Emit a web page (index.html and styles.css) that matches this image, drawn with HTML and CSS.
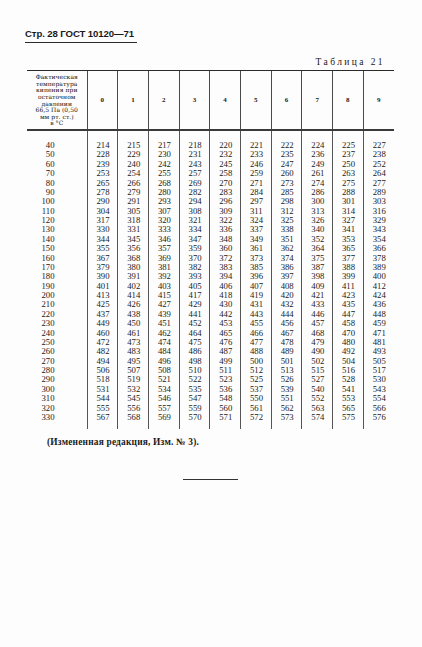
FILE: index.html
```html
<!DOCTYPE html>
<html lang="ru">
<head>
<meta charset="utf-8">
<title>ГОСТ 10120—71, стр. 28</title>
<link rel="stylesheet" href="styles.css">
</head>
<body>
<div class="page">
  <div class="running"><span class="runhead">Стр. 28 ГОСТ 10120—71</span></div>
  <div class="caption">Таблица 21</div>
  <table class="data">
    <colgroup><col class="c-first"><col span="10" class="c-num"></colgroup>
    <thead>
      <tr>
        <th class="lead">Фактическая<br>температура<br>кипения при<br>остаточном<br>давлении<br>66,5 Па (0,50<br>мм рт. ст.)<br>в °С</th>
        <th>0</th><th>1</th><th>2</th><th>3</th><th>4</th><th>5</th><th>6</th><th>7</th><th>8</th><th>9</th>
      </tr>
    </thead>
    <tbody>
      <tr class="first"><td>40</td><td>214</td><td>215</td><td>217</td><td>218</td><td>220</td><td>221</td><td>222</td><td>224</td><td>225</td><td>227</td></tr>
      <tr><td>50</td><td>228</td><td>229</td><td>230</td><td>231</td><td>232</td><td>233</td><td>235</td><td>236</td><td>237</td><td>238</td></tr>
      <tr><td>60</td><td>239</td><td>240</td><td>242</td><td>243</td><td>245</td><td>246</td><td>247</td><td>249</td><td>250</td><td>252</td></tr>
      <tr><td>70</td><td>253</td><td>254</td><td>255</td><td>257</td><td>258</td><td>259</td><td>260</td><td>261</td><td>263</td><td>264</td></tr>
      <tr><td>80</td><td>265</td><td>266</td><td>268</td><td>269</td><td>270</td><td>271</td><td>273</td><td>274</td><td>275</td><td>277</td></tr>
      <tr><td>90</td><td>278</td><td>279</td><td>280</td><td>282</td><td>283</td><td>284</td><td>285</td><td>286</td><td>288</td><td>289</td></tr>
      <tr><td>100</td><td>290</td><td>291</td><td>293</td><td>294</td><td>296</td><td>297</td><td>298</td><td>300</td><td>301</td><td>303</td></tr>
      <tr><td>110</td><td>304</td><td>305</td><td>307</td><td>308</td><td>309</td><td>311</td><td>312</td><td>313</td><td>314</td><td>316</td></tr>
      <tr><td>120</td><td>317</td><td>318</td><td>320</td><td>321</td><td>322</td><td>324</td><td>325</td><td>326</td><td>327</td><td>329</td></tr>
      <tr><td>130</td><td>330</td><td>331</td><td>333</td><td>334</td><td>336</td><td>337</td><td>338</td><td>340</td><td>341</td><td>343</td></tr>
      <tr><td>140</td><td>344</td><td>345</td><td>346</td><td>347</td><td>348</td><td>349</td><td>351</td><td>352</td><td>353</td><td>354</td></tr>
      <tr><td>150</td><td>355</td><td>356</td><td>357</td><td>359</td><td>360</td><td>361</td><td>362</td><td>364</td><td>365</td><td>366</td></tr>
      <tr><td>160</td><td>367</td><td>368</td><td>369</td><td>370</td><td>372</td><td>373</td><td>374</td><td>375</td><td>377</td><td>378</td></tr>
      <tr><td>170</td><td>379</td><td>380</td><td>381</td><td>382</td><td>383</td><td>385</td><td>386</td><td>387</td><td>388</td><td>389</td></tr>
      <tr><td>180</td><td>390</td><td>391</td><td>392</td><td>393</td><td>394</td><td>396</td><td>397</td><td>398</td><td>399</td><td>400</td></tr>
      <tr><td>190</td><td>401</td><td>402</td><td>403</td><td>405</td><td>406</td><td>407</td><td>408</td><td>409</td><td>411</td><td>412</td></tr>
      <tr><td>200</td><td>413</td><td>414</td><td>415</td><td>417</td><td>418</td><td>419</td><td>420</td><td>421</td><td>423</td><td>424</td></tr>
      <tr><td>210</td><td>425</td><td>426</td><td>427</td><td>429</td><td>430</td><td>431</td><td>432</td><td>433</td><td>435</td><td>436</td></tr>
      <tr><td>220</td><td>437</td><td>438</td><td>439</td><td>441</td><td>442</td><td>443</td><td>444</td><td>446</td><td>447</td><td>448</td></tr>
      <tr><td>230</td><td>449</td><td>450</td><td>451</td><td>452</td><td>453</td><td>455</td><td>456</td><td>457</td><td>458</td><td>459</td></tr>
      <tr><td>240</td><td>460</td><td>461</td><td>462</td><td>464</td><td>465</td><td>466</td><td>467</td><td>468</td><td>470</td><td>471</td></tr>
      <tr><td>250</td><td>472</td><td>473</td><td>474</td><td>475</td><td>476</td><td>477</td><td>478</td><td>479</td><td>480</td><td>481</td></tr>
      <tr><td>260</td><td>482</td><td>483</td><td>484</td><td>486</td><td>487</td><td>488</td><td>489</td><td>490</td><td>492</td><td>493</td></tr>
      <tr><td>270</td><td>494</td><td>495</td><td>496</td><td>498</td><td>499</td><td>500</td><td>501</td><td>502</td><td>504</td><td>505</td></tr>
      <tr><td>280</td><td>506</td><td>507</td><td>508</td><td>510</td><td>511</td><td>512</td><td>513</td><td>515</td><td>516</td><td>517</td></tr>
      <tr><td>290</td><td>518</td><td>519</td><td>521</td><td>522</td><td>523</td><td>525</td><td>526</td><td>527</td><td>528</td><td>530</td></tr>
      <tr><td>300</td><td>531</td><td>532</td><td>534</td><td>535</td><td>536</td><td>537</td><td>539</td><td>540</td><td>541</td><td>543</td></tr>
      <tr><td>310</td><td>544</td><td>545</td><td>546</td><td>547</td><td>548</td><td>550</td><td>551</td><td>552</td><td>553</td><td>554</td></tr>
      <tr><td>320</td><td>555</td><td>556</td><td>557</td><td>559</td><td>560</td><td>561</td><td>562</td><td>563</td><td>565</td><td>566</td></tr>
      <tr class="last"><td>330</td><td>567</td><td>568</td><td>569</td><td>570</td><td>571</td><td>572</td><td>573</td><td>574</td><td>575</td><td>576</td></tr>
    </tbody>
  </table>
  <p class="note">(Измененная редакция, Изм. № 3).</p>
  <div class="endrule"></div>
</div>
</body>
</html>
```

FILE: styles.css
```css
html, body {
  margin: 0;
  padding: 0;
  background: #fdfdfd;
}

.page {
  width: 422px;
  height: 647px;
  box-sizing: border-box;
  padding: 28px 0 0 0;
  color: #1a1a1a;
  font-family: "Liberation Serif", "Times New Roman", serif;
  font-size: 9px;
}

.running {
  display: flex;
  padding-left: 25px;
}

.runhead {
  display: block;
  width: 112px;
  font-family: "Liberation Sans", Arial, sans-serif;
  font-weight: bold;
  font-size: 9.6px;
  line-height: 11px;
  padding-bottom: 3px;
  border-bottom: 1.5px solid #2a2a2a;
  letter-spacing: -0.1px;
}

.caption {
  margin-top: 14px;
  padding-right: 37px;
  text-align: right;
  font-size: 9.5px;
  line-height: 11px;
  letter-spacing: 2.4px;
}

.data {
  margin-left: 27px;
  margin-top: 2px;
  width: 367px;
  border-collapse: collapse;
  table-layout: fixed;
}

.c-first { width: 60px; }
.c-num { width: 30.7px; }

.data thead th {
  height: 57px;
  padding: 0;
  border-top: 1.5px solid #2a2a2a;
  border-bottom: 2px solid #3a3a3a;
  border-left: 1px solid #4a4a4a;
  font-weight: bold;
  font-size: 7px;
  text-align: center;
  vertical-align: middle;
}

.data thead th:first-child {
  border-left: none;
}

.data thead th.lead {
  font-family: "DejaVu Serif", serif;
  font-weight: normal;
  font-size: 6px;
  line-height: 6.6px;
  letter-spacing: 0.05px;
  padding-top: 1px;
  color: #111;
}

.data tbody td {
  padding: 0 0 0 9px;
  font-size: 8.7px;
  line-height: 9.38px;
  text-align: left;
  border-left: 1px solid #555;
  white-space: nowrap;
}

.data tbody td:first-child {
  border-left: none;
  text-align: right;
  padding: 0 32px 0 0;
}

.data tbody tr.first td {
  padding-top: 10px;
}

.data tbody tr.last td {
  padding-bottom: 7px;
}

.note {
  margin: 8px 0 0 47px;
  font-weight: bold;
  font-size: 9.4px;
  line-height: 11px;
  letter-spacing: 0.2px;
}

.endrule {
  margin: 31px 0 0 183px;
  width: 55px;
  border-top: 1px solid #333;
}
```
